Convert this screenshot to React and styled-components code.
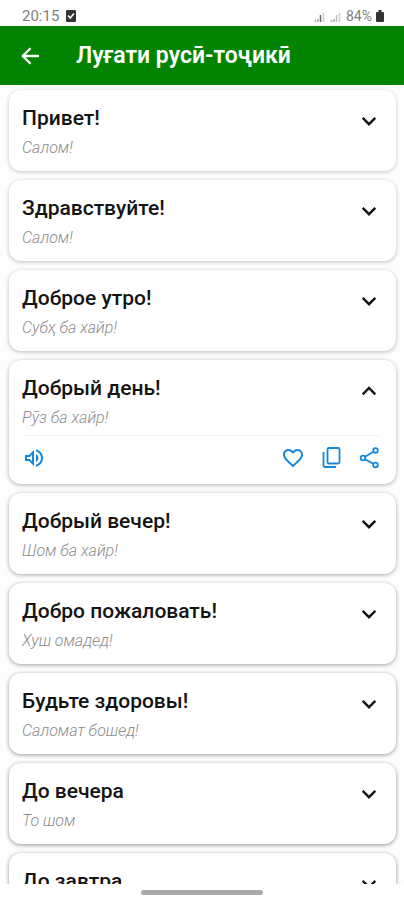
import React, { useState } from "react";
import styled, { createGlobalStyle } from "styled-components";
import { MdFavoriteBorder, MdOutlineVolumeUp } from "react-icons/md";

const GlobalStyle = createGlobalStyle`
  * { box-sizing: border-box; }
  body { margin: 0; background: #fff; font-family: Roboto, "Noto Sans", sans-serif; color: #141414; }
  button { border: 0; padding: 0; background: none; font: inherit; color: inherit; cursor: pointer; display: flex; }
`;

const Screen = styled.div`
  height: 100vh;
  display: flex;
  flex-direction: column;
  overflow: hidden;
`;
const StatusBar = styled.div`
  flex: none;
  height: 26px;
  padding: 5px 20px 0 22px;
  display: flex;
  justify-content: space-between;
  align-items: center;
  font-size: 14px;
  line-height: 20px;
  color: #808080;
`;
const StatusGroup = styled.div`
  display: flex;
  align-items: center;
  gap: ${(p) => p.$gap}px;
`;
const Clock = styled.span`
  font-size: 15px;
`;
const AppBar = styled.header`
  flex: none;
  height: 59px;
  padding: 0 18px;
  display: flex;
  align-items: center;
  gap: 34px;
  background: #028402;
  color: #fff;
`;
const Title = styled.h1`
  margin: 0;
  font-size: 23px;
  line-height: 28px;
  font-weight: 600;
`;
const List = styled.main`
  flex: 1;
  min-height: 0;
  overflow: hidden;
  padding: 5px 8px 0 9px;
  display: flex;
  flex-direction: column;
  gap: 9px;
  background: #fdfdfd;
`;
const Card = styled.article`
  flex: none;
  padding: 14px 15px 12px 13px;
  border-radius: 12px;
  background: #fff;
  box-shadow: 0 1px 4px rgba(0, 0, 0, ${(p) => p.$shade});
`;
const CardHead = styled.div`
  display: flex;
  justify-content: space-between;
  align-items: center;
`;
const Phrase = styled.h2`
  margin: 0;
  font-size: 21px;
  line-height: 28px;
  font-weight: 500;
`;
const Toggle = styled.button`
  align-self: flex-end;
  height: 23px;
  align-items: center;
`;
const Translation = styled.p`
  margin: 4px 0 0;
  font-size: 16px;
  line-height: 23px;
  font-style: italic;
  font-weight: 300;
  color: #8c8c8c;
`;
const Actions = styled.div`
  margin-top: 6px;
  padding: 10px 0 2px;
  border-top: 1px solid #f4f4f4;
  display: flex;
  align-items: center;
  gap: 14px;
  color: #1488dc;
`;
const Spacer = styled.span`
  flex: 1;
`;
const BottomBar = styled.footer`
  flex: none;
  height: 16px;
  display: flex;
  justify-content: center;
  align-items: center;
`;
const HomeHandle = styled.span`
  width: 122px;
  height: 5px;
  border-radius: 3px;
  background: #aaa;
`;

const CheckIcon = () => (
  <svg width="10" height="12" viewBox="0 0 10 12">
    <rect width="10" height="12" rx="1" fill="#333" />
    <path d="M2 5.500 4.200 8 8 3.500" fill="none" stroke="#fff" strokeWidth="1.500" />
  </svg>
);
const SignalIcon = ({ bar }) => (
  <svg width="12" height="12" viewBox="0 0 12 12">
    <path d="M1.500 12v-2M4 12V9" stroke="#aaa" strokeWidth="1.500" />
    <path d="M6.500 12V5" stroke={bar} strokeWidth="1.500" />
    <path d="M9.500 12V3" stroke="#ccc" strokeWidth="1.500" />
  </svg>
);
const BatteryIcon = () => (
  <svg width="8" height="12" viewBox="0 0 8 12">
    <path d="M2.500 0h3v2H7q1 0 1 1v8q0 1-1 1H1q-1 0-1-1V3q0-1 1-1h1.500Z" fill="#333" />
  </svg>
);
const BackIcon = () => (
  <svg width="24" height="24" viewBox="0 0 24 24" fill="none" stroke="currentColor" strokeWidth="2.300">
    <path d="M21 12H5M12.500 4.200 4.700 12l7.800 7.800" />
  </svg>
);
const ChevronIcon = ({ up }) => (
  <svg width="24" height="24" viewBox="0 0 24 24" fill="none" stroke="currentColor" strokeWidth="2.400">
    <path d={up ? "m5.700 15.300 6.300-6.300 6.300 6.300" : "m5.700 8.900 6.300 6.300 6.300-6.300"} />
  </svg>
);
const CopyIcon = () => (
  <svg width="24" height="24" viewBox="0 0 24 24" fill="none" stroke="currentColor" strokeWidth="1.800">
    <rect x="8.500" y="2" width="12" height="15.500" rx="1.500" />
    <path d="M4.500 6v13.500q0 1.500 1.500 1.500h11" />
  </svg>
);
const ShareIcon = () => (
  <svg width="24" height="24" viewBox="0 0 24 24" fill="none" stroke="currentColor" strokeWidth="1.800">
    <circle cx="18.500" cy="4.500" r="2.300" />
    <circle cx="6" cy="12" r="2.300" />
    <circle cx="18.500" cy="19" r="2.300" />
    <path d="m8 10.800 8.500-5.100M8 13.200l8.500 4.700" />
  </svg>
);

const phrases = [
  ["Привет!", "Салом!"],
  ["Здравствуйте!", "Салом!"],
  ["Доброе утро!", "Субҳ ба хайр!"],
  ["Добрый день!", "Рӯз ба хайр!"],
  ["Добрый вечер!", "Шом ба хайр!"],
  ["Добро пожаловать!", "Хуш омадед!"],
  ["Будьте здоровы!", "Саломат бошед!"],
  ["До вечера", "То шом"],
  ["До завтра", ""],
];

const shades = [0.22, 0.25, 0.28, 0.31, 0.34, 0.37, 0.4, 0.42, 0.42];

export default function App() {
  const [open, setOpen] = useState(3);
  return (
    <Screen>
      <GlobalStyle />
      <StatusBar>
        <StatusGroup $gap={7}><Clock>20:15</Clock><CheckIcon /></StatusGroup>
        <StatusGroup $gap={4}>
          <SignalIcon bar="#666" />
          <SignalIcon bar="#bbb" />
          <span>84%</span>
          <BatteryIcon />
        </StatusGroup>
      </StatusBar>
      <AppBar>
        <button aria-label="Back"><BackIcon /></button>
        <Title>Луғати русӣ-тоҷикӣ</Title>
      </AppBar>
      <List>
        {phrases.map(([phrase, translation], i) => (
          <Card key={phrase} $shade={shades[i]}>
            <CardHead>
              <Phrase>{phrase}</Phrase>
              <Toggle aria-label="Details" aria-expanded={open === i} onClick={() => setOpen(open === i ? -1 : i)}>
                <ChevronIcon up={open === i} />
              </Toggle>
            </CardHead>
            {translation && <Translation>{translation}</Translation>}
            {open === i && (
              <Actions>
                <button aria-label="Listen"><MdOutlineVolumeUp size={24} /></button>
                <Spacer />
                <button aria-label="Favourite"><MdFavoriteBorder size={24} /></button>
                <button aria-label="Copy"><CopyIcon /></button>
                <button aria-label="Share"><ShareIcon /></button>
              </Actions>
            )}
          </Card>
        ))}
      </List>
      <BottomBar><HomeHandle /></BottomBar>
    </Screen>
  );
}
